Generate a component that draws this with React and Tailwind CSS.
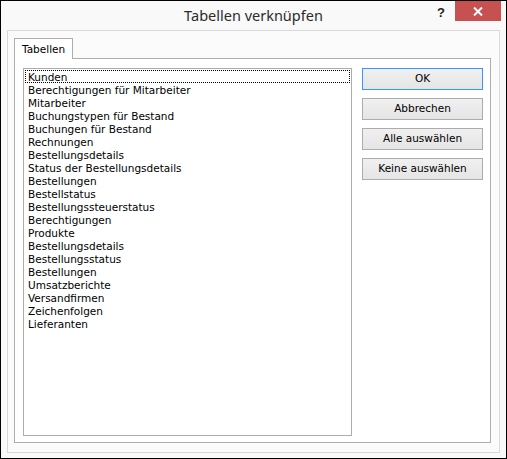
import React from 'react';

const tabellen = [
  'Kunden',
  'Berechtigungen für Mitarbeiter',
  'Mitarbeiter',
  'Buchungstypen für Bestand',
  'Buchungen für Bestand',
  'Rechnungen',
  'Bestellungsdetails',
  'Status der Bestellungsdetails',
  'Bestellungen',
  'Bestellstatus',
  'Bestellungssteuerstatus',
  'Berechtigungen',
  'Produkte',
  'Bestellungsdetails',
  'Bestellungsstatus',
  'Bestellungen',
  'Umsatzberichte',
  'Versandfirmen',
  'Zeichenfolgen',
  'Lieferanten',
];

const buttons = ['OK', 'Abbrechen', 'Alle auswählen', 'Keine auswählen'];

function DialogButton({ label, primary }) {
  return (
    <button
      className={
        primary
          ? 'h-[22px] w-full border border-[#3399ff] bg-gradient-to-b from-[#f0f0f0] to-[#e5e5e5] text-[10.5px] text-black'
          : 'h-[22px] w-full border border-[#acacac] bg-gradient-to-b from-[#f0f0f0] to-[#e5e5e5] text-[10.5px] text-black'
      }
    >
      {label}
    </button>
  );
}

export default function App() {
  return (
    <div
      className="w-[507px] h-[459px] border border-black bg-[#f9f9f9] flex flex-col"
      style={{ fontFamily: '"DejaVu Sans", sans-serif' }}
    >
      {/* Titelleiste */}
      <div className="relative h-[29px] flex items-center justify-center">
        <span
          className="text-[14.5px] text-[#2b2b2b]"
          style={{ fontFamily: '"Noto Sans", sans-serif' }}
        >
          Tabellen verknüpfen
        </span>
        <span
          className="absolute left-[436px] top-[2px] text-[13px] font-bold text-[#222]"
          style={{ fontFamily: '"Liberation Sans", sans-serif' }}
        >
          ?
        </span>
        <div className="absolute left-[454px] top-0 w-[46px] h-[20px] bg-[#c75050] flex items-center justify-center">
          <svg width="10" height="9" viewBox="0 0 10 9">
            <path d="M1 0.5 L9 8.5 M9 0.5 L1 8.5" stroke="#fff" strokeWidth="2" />
          </svg>
        </div>
      </div>

      {/* Rahmen */}
      <div className="ml-[6px] mr-[6px] mb-[5px] flex-1 border border-[#d9d9d9] bg-[#fbfbfb] pl-[6px] pr-[8px] pt-[7px] pb-[9px] flex flex-col">
        <div className="flex">
          <div className="relative z-10 -mb-px h-[21px] w-[59px] border border-b-0 border-[#adadad] bg-white pl-[7px] pt-[3px] text-[10.5px] text-black">
            Tabellen
          </div>
        </div>
        <div className="flex-1 border border-[#adadad] bg-white pl-[8px] pt-[9px] flex">
          <div className="w-[329px] h-[368px] border border-[#adadad] bg-white p-[1px] text-[10.5px] text-black leading-[13px]">
            {tabellen.map((name, i) => (
              <div
                key={i}
                className={
                  i === 0
                    ? 'h-[13px] border border-dotted border-black pl-[2px] leading-[12px] whitespace-nowrap'
                    : 'h-[13px] pl-[3px] leading-[14px] whitespace-nowrap'
                }
              >
                {name}
              </div>
            ))}
          </div>
          <div className="ml-[10px] w-[121px] flex flex-col gap-[8px]">
            {buttons.map((b, i) => (
              <DialogButton key={b} label={b} primary={i === 0} />
            ))}
          </div>
        </div>
      </div>
    </div>
  );
}
